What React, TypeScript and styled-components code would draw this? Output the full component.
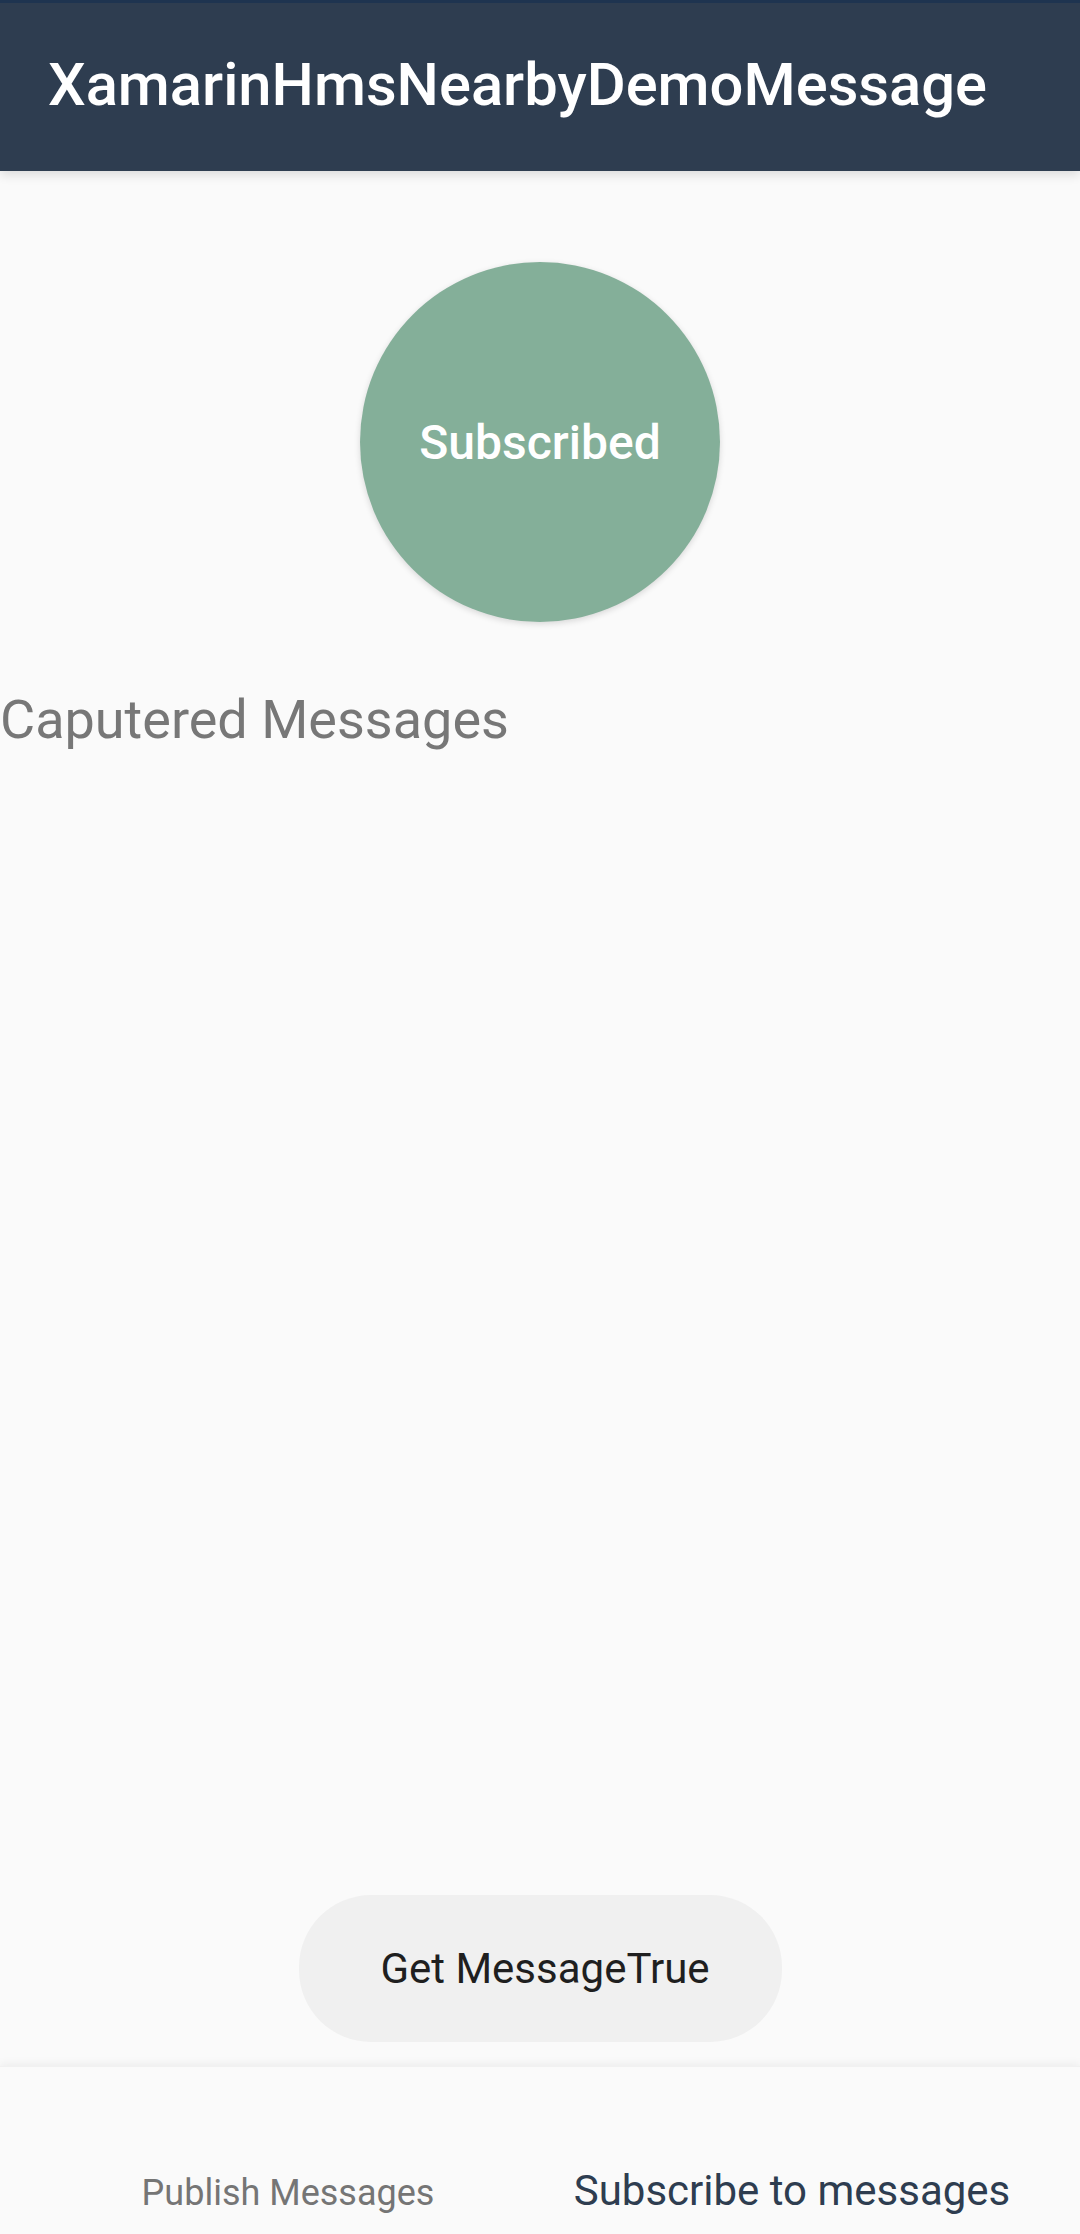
import React, { useState } from 'react';
import styled, { createGlobalStyle } from 'styled-components';

const GlobalStyle = createGlobalStyle`
  html, body {
    margin: 0;
    padding: 0;
    background: #fafafa;
  }
  * { box-sizing: border-box; }
`;

const Screen = styled.div`
  display: flex;
  flex-direction: column;
  width: 1080px;
  height: 2234px;
  background: #fafafa;
  font-family: Roboto, "Liberation Sans", sans-serif;
  overflow: hidden;
`;

const Header = styled.header`
  flex: 0 0 171px;
  display: flex;
  align-items: center;
  padding: 0 48px 4px;
  background: #2e3d50;
  border-top: 3px solid #1e3450;
  box-shadow: 0 4px 10px rgba(0, 0, 0, 0.12);
  position: relative;
  z-index: 2;
`;

const Title = styled.h1`
  margin: 0;
  color: #ffffff;
  font-size: 59.7px;
  font-weight: 500;
  letter-spacing: 0;
`;

const Content = styled.main`
  flex: 1;
  display: flex;
  flex-direction: column;
  align-items: center;
`;

const Circle = styled.button<{ $active: boolean }>`
  width: 360px;
  height: 360px;
  margin-top: 91px;
  border: none;
  border-radius: 50%;
  background: ${p => (p.$active ? '#84af99' : '#b0b0b0')};
  box-shadow: 0 2px 6px rgba(0, 0, 0, 0.14);
  color: #ffffff;
  font-family: inherit;
  font-size: 48px;
  font-weight: 500;
  cursor: pointer;
`;

const Caption = styled.div`
  align-self: stretch;
  margin-top: 66px;
  color: #777777;
  font-size: 54px;
  line-height: 63px;
`;

const Messages = styled.div`
  flex: 1;
  align-self: stretch;
`;

const PillButton = styled.button`
  width: 483px;
  height: 147px;
  margin-bottom: 24px;
  padding: 0 0 0 10px;
  border: none;
  border-radius: 72px;
  background: #f0f0f0;
  color: #1f1f1f;
  font-family: inherit;
  font-size: 42px;
  cursor: pointer;
`;

const TabBar = styled.nav`
  flex: 0 0 168px;
  display: flex;
  justify-content: center;
  background: #fafafa;
  box-shadow: 0 -3px 8px rgba(0, 0, 0, 0.05);
  border-top: 1px solid #f1f1f1;
  position: relative;
`;

const Tab = styled.button<{ $selected: boolean }>`
  width: 504px;
  display: flex;
  align-items: flex-end;
  justify-content: center;
  padding: 0 0 ${p => (p.$selected ? '19px' : '20px')};
  border: none;
  background: transparent;
  color: ${p => (p.$selected ? '#2e3d50' : '#757575')};
  font-family: inherit;
  font-size: ${p => (p.$selected ? '42px' : '36px')};
  cursor: pointer;
`;

const tabs = ['Publish Messages', 'Subscribe to messages'];

const App = () => {
  const [selected, setSelected] = useState(1);
  const [subscribed, setSubscribed] = useState(true);
  return (
    <Screen>
      <GlobalStyle />
      <Header>
        <Title>XamarinHmsNearbyDemoMessage</Title>
      </Header>
      <Content>
        <Circle $active={subscribed} onClick={() => setSubscribed(!subscribed)}>
          {subscribed ? 'Subscribed' : 'Subscribe'}
        </Circle>
        <Caption>Caputered Messages</Caption>
        <Messages />
        <PillButton>Get MessageTrue</PillButton>
      </Content>
      <TabBar>
        {tabs.map((t, i) => (
          <Tab key={t} $selected={i === selected} onClick={() => setSelected(i)}>
            {t}
          </Tab>
        ))}
      </TabBar>
    </Screen>
  );
};

export default App;
